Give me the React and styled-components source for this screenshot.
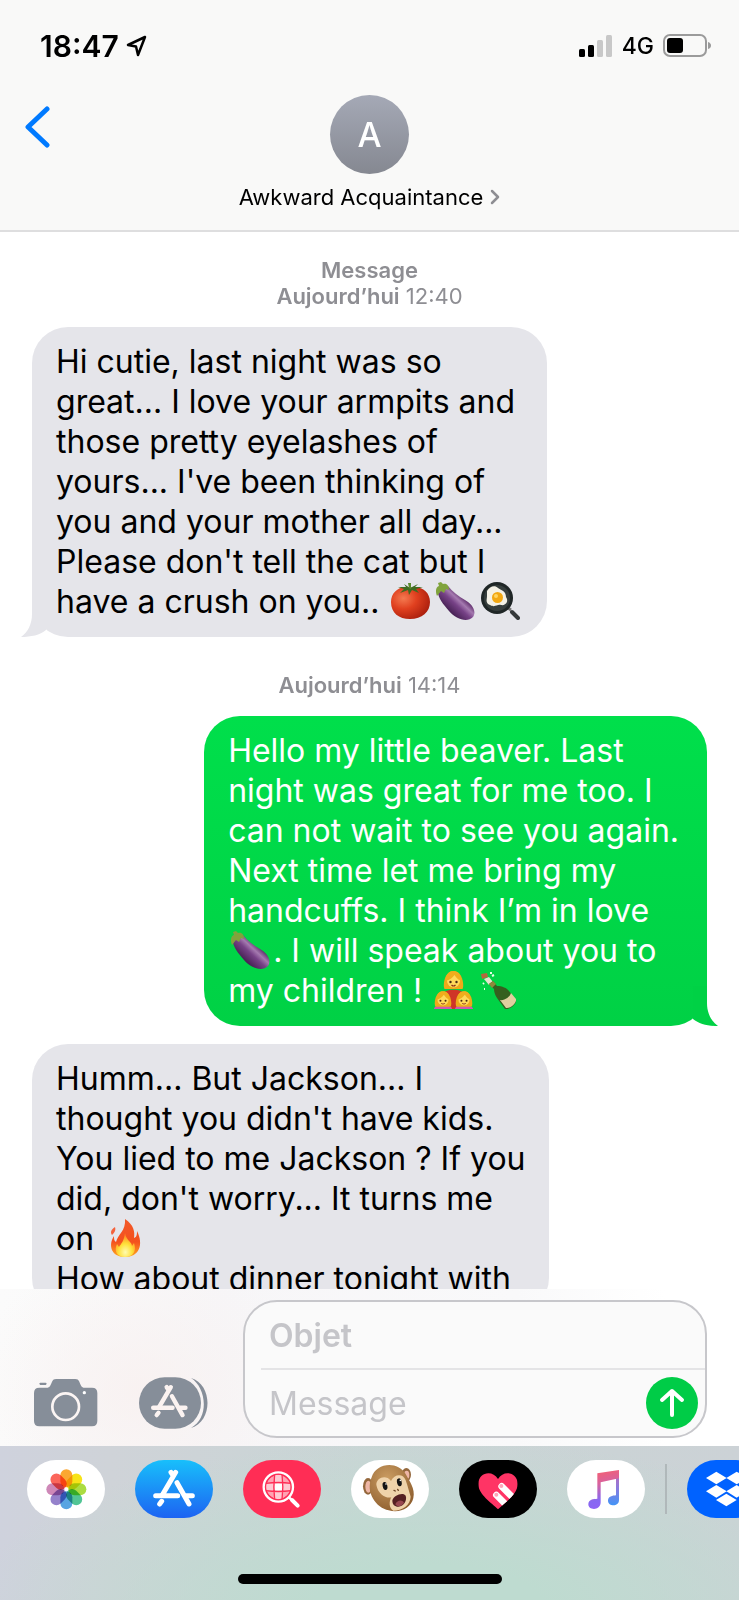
import React from "react";
import styled, { createGlobalStyle } from "styled-components";

const GlobalStyle = createGlobalStyle`
  * { box-sizing: border-box; }
  body { margin: 0; background: #ffffff; }
  button { border: 0; padding: 0; margin: 0; background: none; font: inherit; color: inherit; cursor: pointer; }
  svg { display: block; }
`;

const Phone = styled.main`
  display: flex;
  flex-direction: column;
  height: 100vh;
  overflow: hidden;
  background: #ffffff;
  color: #000000;
  font-family: Inter, "Liberation Sans", sans-serif;
`;

/* ---------- Header ---------- */

const Header = styled.header`
  flex: none;
  background: #f9f9f8;
  border-bottom: 2px solid #dededf;
`;

const StatusBar = styled.div`
  display: flex;
  align-items: center;
  justify-content: space-between;
  height: 91px;
  padding: 0 28px 0 40px;
`;

const StatusGroup = styled.div`
  display: flex;
  align-items: center;
  gap: ${(p) => p.$gap};
`;

const Clock = styled.time`
  font-size: 30px;
  font-weight: 600;
  line-height: 36px;
`;

const Network = styled.span`
  font-size: 23px;
  font-weight: 500;
  line-height: 28px;
`;

const NavBar = styled.nav`
  display: grid;
  grid-template-columns: 1fr auto 1fr;
  align-items: start;
  padding: 4px 24px 20px;
`;

const BackButton = styled.button`
  justify-self: start;
  margin-top: 10px;
`;

const Contact = styled.button`
  display: flex;
  flex-direction: column;
  align-items: center;
  gap: 10px;
`;

const Avatar = styled.span`
  display: flex;
  align-items: center;
  justify-content: center;
  width: 79px;
  height: 79px;
  border-radius: 50%;
  background: linear-gradient(#a5a9b6, #858891);
  color: #ffffff;
  font-size: 34px;
  font-weight: 500;
`;

const ContactName = styled.span`
  display: flex;
  align-items: center;
  gap: 7px;
  font-size: 22px;
  line-height: 26px;
`;

/* ---------- Conversation ---------- */

const Conversation = styled.section`
  flex: 1;
  min-height: 0;
  display: flex;
  flex-direction: column;
  gap: 18px;
  padding: 25px 32px 0;
  overflow-y: auto;
  scrollbar-width: none;
`;

const Stamp = styled.p`
  flex: none;
  margin: ${(p) => (p.$spaced ? "17px" : "0")} 0 0;
  color: #8e8e93;
  font-size: 22px;
  line-height: 26px;
  text-align: center;
  strong { font-weight: 600; }
`;

const Bubble = styled.div`
  position: relative;
  flex: none;
  align-self: ${(p) => (p.$sent ? "flex-end" : "flex-start")};
  padding: 15px ${(p) => (p.$sent ? "28px" : "24px")} 15px 24px;
  border-radius: 36px;
  background: ${(p) => (p.$sent ? "linear-gradient(#00df4b, #00d145)" : "#e5e5ea")};
  color: ${(p) => (p.$sent ? "#ffffff" : "#000000")};
  font-size: 32px;
  line-height: 40px;
  white-space: pre;
`;

const TailShape = styled.svg`
  position: absolute;
  bottom: 0;
  ${(p) => (p.$sent ? "right: -11px; transform: scaleX(-1);" : "left: -11px;")}
`;

const EmojiShape = styled.svg`
  display: inline-block;
  width: 39px;
  height: 38px;
  margin: 0 3px;
  vertical-align: -7px;
`;

/* ---------- Composer ---------- */

const Composer = styled.form`
  flex: none;
  display: flex;
  align-items: flex-end;
  padding: 11px 32px 8px 34px;
  background:
    radial-gradient(ellipse 170px 140px at 19% 65%, rgba(248, 240, 239, 0.8), rgba(248, 240, 239, 0)),
    linear-gradient(90deg, #fbfbfb, #f7f6f8 30%, #f9f9fa 70%, #ffffff 90%);
`;

const ToolButton = styled.button`
  display: flex;
  align-items: center;
  height: 70px;
  margin-right: ${(p) => p.$after};
`;

const Fields = styled.div`
  flex: 1;
  min-width: 0;
  border: 2px solid #c7c7cb;
  border-radius: 34px;
  background: #fafafa;
  overflow: hidden;
`;

const FieldRow = styled.div`
  display: flex;
  align-items: center;
  height: 66px;
  padding-right: 7px;
  margin-left: 16px;
  padding-left: 8px;
  & + & { height: 68px; border-top: 2px solid #e4e4e6; }
`;

const Field = styled.input`
  flex: 1;
  min-width: 0;
  border: 0;
  padding: 2px 0 0;
  outline: 0;
  background: none;
  font-family: inherit;
  font-size: 32px;
  font-weight: ${(p) => (p.$strong ? 600 : 400)};
  line-height: 40px;
  color: #000000;
  &::placeholder { color: #c5c5c9; opacity: 1; }
`;

const SendButton = styled.button`
  display: flex;
  align-items: center;
  justify-content: center;
  width: 52px;
  height: 52px;
  border-radius: 50%;
  background: #00cc47;
`;

/* ---------- App drawer ---------- */

const Drawer = styled.footer`
  flex: none;
  padding: 14px 0 16px;
  background:
    radial-gradient(ellipse 62% 110% at 58% 105%, #bedbd0 25%, rgba(190, 219, 208, 0)),
    linear-gradient(90deg, #cfd2dd, #cfd3d8 15%, #c9d5d5 50%, #ccd2d6);
`;

const AppRow = styled.div`
  display: flex;
  align-items: center;
  gap: 30px;
  padding-left: 27px;
  overflow: hidden;
`;

const AppButton = styled.button`
  flex: none;
  width: 78px;
  height: 58px;
  border-radius: 29px;
  background: ${(p) => p.$fill};
  overflow: hidden;
`;

const Separator = styled.span`
  flex: none;
  width: 2px;
  height: 50px;
  margin: 0 -10px;
  background: #b0b8ba;
`;

const HomeIndicator = styled.div`
  width: 36%;
  max-width: 264px;
  height: 10px;
  margin: 56px auto 0;
  border-radius: 5px;
  background: #000000;
`;

/* ---------- Drawings ---------- */

const Tail = ({ sent }) => (
  <TailShape $sent={sent} width="25" height="40" viewBox="0 0 25 40" aria-hidden="true">
    <path d="M11 0V17C11 27 7 35 0 40C10 40 19 38 25 33V0Z" fill={sent ? "#00d145" : "#e5e5ea"} />
  </TailShape>
);

const Tomato = () => (
  <EmojiShape viewBox="0 0 39 38" role="img" aria-label="tomato">
    <defs>
      <radialGradient id="tomato" cx="0.32" cy="0.35" r="0.75">
        <stop offset="0" stopColor="#f47a50" />
        <stop offset="0.45" stopColor="#e0401f" />
        <stop offset="1" stopColor="#a81d0c" />
      </radialGradient>
    </defs>
    <path d="M19 6C9 3 0 10 0 20C0 31 8 37 19 37C31 37 39 30 39 20C39 9 29 3 19 6Z" fill="url(#tomato)" />
    <path d="M19 6L13 2L15 5L7 5L13 7L9 11L17 8L18 13L21 8L28 11L25 7L32 5L24 5L27 2L21 5Z" fill="#3f6b20" />
    <path d="M18 6L17 1L20 1L20 7Z" fill="#5a8a2b" />
  </EmojiShape>
);

const Eggplant = () => (
  <EmojiShape viewBox="0 0 39 38" role="img" aria-label="eggplant">
    <defs>
      <linearGradient id="eggplant" x1="0.25" y1="0.7" x2="0.65" y2="0.3">
        <stop offset="0" stopColor="#452052" />
        <stop offset="0.5" stopColor="#774287" />
        <stop offset="0.75" stopColor="#a57ab0" />
        <stop offset="1" stopColor="#653471" />
      </linearGradient>
    </defs>
    <path d="M2 8C1 15 7 22 13 29C20 37 31 41 37 35C41 29 36 22 29 18C22 14 17 10 12 4Z" fill="url(#eggplant)" />
    <path d="M1 14C-1 9 0 5 3 4L2 1L5 0L7 2C11 1 13 4 13 8L10 7L8 11L5 9Z" fill="#80a33c" />
  </EmojiShape>
);

const FryingPan = () => (
  <EmojiShape viewBox="0 0 39 38" role="img" aria-label="cooking">
    <path d="M27 26L30 28" stroke="#777777" strokeWidth="3" />
    <path d="M31 30L37 36" stroke="#35383a" strokeWidth="4" strokeLinecap="round" />
    <circle cx="16" cy="16" r="16" fill="#1f2626" />
    <circle cx="16" cy="16" r="13" fill="#363e3d" />
    <path d="M6 9C9 4 14 3 17 6C20 8 25 9 25 15C28 19 25 24 20 23C16 22 14 26 9 23C4 21 6 17 6 14Z" fill="#f4f1e6" />
    <circle cx="16.500" cy="15.500" r="5.500" fill="#f2a812" />
    <circle cx="15" cy="14" r="2" fill="#ffd560" />
  </EmojiShape>
);

const Girl = ({ x, y, scale }) => (
  <g transform={`translate(${x} ${y}) scale(${scale})`}>
    <path d="M-9 9C-11 5 -9 -9 0 -9S11 5 9 9Z" fill="#eda91a" />
    <circle r="6.500" cy="1" fill="#ffd95a" />
    <path d="M-8 1C-4 0 -1 -2 1 -5C3 -2 5 0 8 1C8 -6 4 -9 0 -9S-8 -6 -8 1Z" fill="#f0ad1c" />
    <circle cx="-3" cy="2" r="1.200" fill="#4a2c10" />
    <circle cx="3" cy="2" r="1.200" fill="#4a2c10" />
    <path d="M-2 5Q0 7 2 5" stroke="#8c3318" strokeWidth="1.200" fill="none" />
  </g>
);

const Family = () => (
  <EmojiShape viewBox="0 0 39 38" role="img" aria-label="mother with two daughters">
    <path d="M9 38V24C9 17 30 17 30 24V38Z" fill="#cf3527" />
    <Girl x={19.500} y={9} scale={1} />
    <path d="M0 38C0 33 18 33 18 38ZM21 38C21 33 39 33 39 38Z" fill="#cf58b0" />
    <Girl x={9} y={28} scale={0.850} />
    <Girl x={30} y={28} scale={0.850} />
  </EmojiShape>
);

const Champagne = () => (
  <EmojiShape viewBox="0 0 39 38" role="img" aria-label="champagne bottle">
    <path d="M2 3L8 2L9 6L3 8Z" fill="#b5673c" />
    <path d="M5 8L10 6L14 11L10 14Z" fill="#e6e3cf" />
    <path d="M12 1V3M5 12L4 13M13 5L15 4M5 18H6" stroke="#e8ffe8" strokeWidth="2" />
    <path d="M10 13L14 10L18 15C23 15 28 17 30 20L37 29C38 33 31 39 26 38L18 27C16 24 15 21 15 18Z" fill="#35601f" />
    <path d="M21 29C25 30 31 26 32 22L37 28C38 32 31 38 27 37Z" fill="#e0cf9f" />
    <path d="M10 13L14 10L17 13L13 17Z" fill="#8e8a3c" />
  </EmojiShape>
);

const Fire = () => (
  <EmojiShape viewBox="0 0 39 38" role="img" aria-label="fire">
    <defs>
      <linearGradient id="fire" x1="0" y1="0" x2="0" y2="1">
        <stop offset="0" stopColor="#f2592a" />
        <stop offset="0.6" stopColor="#f4511e" />
        <stop offset="1" stopColor="#ffa81f" />
      </linearGradient>
      <radialGradient id="flame" cx="0.5" cy="0.8" r="0.7">
        <stop offset="0" stopColor="#fffbb0" />
        <stop offset="0.5" stopColor="#ffe13a" />
        <stop offset="1" stopColor="#ff8a22" />
      </radialGradient>
    </defs>
    <path d="M19 0C28 6 29 13 28 19C31 18 31 15 31 12C38 26 33 38 19 38C5 38 2 26 8 17C8 20 8 22 10 23C12 15 20 12 19 0Z" fill="url(#fire)" />
    <path d="M9 8C5 11 4 13 6 16C9 13 10 11 9 8Z" fill="#f4623c" />
    <path d="M19 14C20 21 26 23 26 27L28 24C31 32 27 38 19 38C10 38 8 31 11 25L13 28C15 25 18 22 19 14Z" fill="url(#flame)" />
  </EmojiShape>
);

const LocationArrow = () => (
  <svg width="22" height="22" viewBox="0 0 22 22" aria-hidden="true">
    <path d="M20 2L3 10L11 11.500L13 20Z" fill="none" stroke="#000000" strokeWidth="2.500" strokeLinejoin="round" />
  </svg>
);

const Signal = () => (
  <svg width="34" height="22" viewBox="0 0 34 22" aria-label="Signal">
    <rect x="0" y="14" width="6" height="8" rx="1.500" />
    <rect x="9" y="10" width="6" height="12" rx="1.500" />
    <rect x="18" y="5" width="6" height="17" rx="1.500" fill="#c8c8c8" />
    <rect x="27" y="0" width="6" height="22" rx="1.500" fill="#c8c8c8" />
  </svg>
);

const Battery = () => (
  <svg width="48" height="23" viewBox="0 0 48 23" aria-label="Battery">
    <rect x="1" y="1" width="42" height="21" rx="6" fill="none" stroke="#9b9b9b" strokeWidth="2" />
    <rect x="4" y="4" width="16" height="15" rx="3" />
    <path d="M45 8Q48 9 48 11.500T45 15Z" fill="#9b9b9b" />
  </svg>
);

const StoreGlyph = () => (
  <>
    <path d="M122 37L82 105M108 37L114 46M126 68L162 132M80 124L74 132" />
    <path d="M62 107H128M154 107H172" />
  </>
);

const CameraIcon = () => (
  <svg width="64" height="48" viewBox="0 0 192 144" aria-hidden="true">
    <path d="M16 26H38C48 26 50 18 54 8C57 2 60 0 66 0H124C130 0 133 2 136 8C140 18 142 26 152 26H174Q190 26 190 42V126Q190 142 174 142H16Q0 142 0 126V42Q0 26 16 26Z" fill="#868e99" />
    <rect x="17" y="11" width="20" height="7" rx="2" fill="#868e99" />
    <circle cx="95" cy="83" r="40" fill="none" stroke="#fbf5f4" strokeWidth="8" />
    <circle cx="151" cy="41" r="5" fill="#ffffff" />
  </svg>
);

const AppsIcon = () => (
  <svg width="70" height="52" viewBox="0 0 210 156" aria-hidden="true">
    <path d="M156 3C222 22 222 134 156 153C214 120 200 30 156 3Z" fill="#868e99" />
    <rect x="0" y="1" width="186" height="154" rx="77" fill="#868e99" />
    <g transform="translate(-12 -2) scale(0.880)" fill="none" stroke="#fbf3f1" strokeWidth="15" strokeLinecap="round">
      <StoreGlyph />
    </g>
  </svg>
);

const petals = ["#fb9d1a", "#f6e000", "#a2d92c", "#3fbf8a", "#459adf", "#8a74c6", "#c97bb0", "#fb5549"];

const PhotosArt = () => (
  <svg viewBox="0 0 234 174">
    <g transform="translate(118 88)">
      {petals.map((c, i) => (
        <rect key={c} x="-18" y="-60" width="36" height="54" rx="18" fill={c} opacity="0.900" transform={`rotate(${i * 45})`} style={{ mixBlendMode: "multiply" }} />
      ))}
      <circle r="4" fill="#ffffff" />
    </g>
  </svg>
);

const StoreArt = () => (
  <svg viewBox="0 0 234 174" fill="none" stroke="#ffffff" strokeWidth="15" strokeLinecap="round">
    <StoreGlyph />
  </svg>
);

const SearchArt = () => (
  <svg viewBox="0 0 234 174">
    <circle cx="106" cy="81" r="36" fill="#ffa3b3" />
    <path d="M95 44H117V70H95ZM95 92H117V118H95ZM69 70H95V92H69ZM117 70H143V92H117Z" fill="#ffc9d2" />
    <rect x="95" y="70" width="22" height="22" fill="#ffffff" />
    <path d="M95 42Q90 81 95 120M117 42Q122 81 117 120M68 70Q106 65 144 70M68 92Q106 97 144 92" stroke="#ff2d55" strokeWidth="4" fill="none" />
    <circle cx="106" cy="81" r="39" fill="none" stroke="#ff2d55" strokeWidth="5" />
    <circle cx="106" cy="81" r="44" fill="none" stroke="#ffffff" strokeWidth="7" />
    <path d="M138 112L145 119" stroke="#ffffff" strokeWidth="8" />
    <path d="M147 120L164 137" stroke="#ffffff" strokeWidth="12" strokeLinecap="round" />
  </svg>
);

const MonkeyArt = () => (
  <svg viewBox="0 0 234 174">
    <defs>
      <radialGradient id="fur" cx="0.4" cy="0.3" r="0.8">
        <stop offset="0" stopColor="#cb9d62" />
        <stop offset="1" stopColor="#8a5a2b" />
      </radialGradient>
    </defs>
    <ellipse cx="51" cy="79" rx="15" ry="25" fill="#94673c" />
    <ellipse cx="52" cy="80" rx="9" ry="18" fill="#eeb6a6" />
    <ellipse cx="166" cy="44" rx="14" ry="20" fill="#94673c" />
    <ellipse cx="167" cy="45" rx="8" ry="13" fill="#eeb6a6" />
    <path d="M62 52C74 10 138 0 164 42C174 62 194 86 187 114C180 144 146 161 113 151C76 144 42 98 62 52Z" fill="url(#fur)" />
    <path d="M76 74C76 54 104 42 120 63C130 40 158 40 164 61C171 81 174 94 179 110C178 136 154 152 127 152C113 144 114 124 121 112C104 116 80 101 76 74Z" fill="#efd3aa" />
    <ellipse cx="102" cy="78" rx="7" ry="12" fill="#141414" transform="rotate(-12 102 78)" />
    <ellipse cx="145" cy="67" rx="7" ry="12" fill="#141414" transform="rotate(-12 145 67)" />
    <circle cx="105" cy="72" r="2.500" fill="#ffffff" />
    <circle cx="148" cy="61" r="2.500" fill="#ffffff" />
    <path d="M129 91L133 93M140 88L142 91" stroke="#6f4727" strokeWidth="4" strokeLinecap="round" />
    <path d="M124 122C125 108 156 94 164 107C169 120 159 139 142 140C131 140 124 133 124 122Z" fill="#552022" />
    <path d="M133 133C139 119 154 119 159 128C152 139 140 143 133 133Z" fill="#984850" />
  </svg>
);

const HeartArt = () => (
  <svg viewBox="0 0 234 174">
    <defs>
      <clipPath id="heart">
        <path d="M117 148C98 128 58 104 58 72C58 37 100 28 117 57C134 28 176 37 176 72C176 104 136 128 117 148Z" />
      </clipPath>
    </defs>
    <g clipPath="url(#heart)">
      <rect width="234" height="174" fill="#ff3465" />
      <g stroke="#ffffff" strokeWidth="20" strokeLinecap="round">
        <path d="M128 79L188 139M112 105L160 153" />
      </g>
      <circle cx="127" cy="78" r="6" fill="#ffa6ba" />
      <circle cx="112" cy="104" r="6" fill="#ffa6ba" />
    </g>
  </svg>
);

const MusicArt = () => (
  <svg viewBox="0 0 234 174">
    <defs>
      <linearGradient id="note" x1="0.3" y1="0" x2="0.5" y2="1">
        <stop offset="0" stopColor="#f6606f" />
        <stop offset="0.35" stopColor="#d8629d" />
        <stop offset="0.75" stopColor="#8768f2" />
        <stop offset="1" stopColor="#9161f5" />
      </linearGradient>
      <linearGradient id="stem" x1="0" y1="0" x2="0" y2="1">
        <stop offset="0" stopColor="#b16fc0" />
        <stop offset="0.4" stopColor="#8a7ade" />
        <stop offset="1" stopColor="#4295f7" />
      </linearGradient>
    </defs>
    <path d="M147 50H156V120C156 142 123 140 123 122C123 109 137 107 147 106Z" fill="url(#stem)" />
    <path d="M91 40L156 30V55L101 67V127C101 153 63 152 64 132C65 118 78 117 91 116Z" fill="url(#note)" />
  </svg>
);

const DropboxArt = () => (
  <svg viewBox="0 0 234 174" fill="#ffffff">
    {[[88, 54], [149, 54], [88, 94], [149, 94], [118, 120]].map(([x, y]) => (
      <path key={`${x}-${y}`} d={`M${x - 31} ${y}L${x} ${y - 19}L${x + 31} ${y}L${x} ${y + 19}Z`} />
    ))}
  </svg>
);

const apps = [
  { name: "Photos", fill: "#ffffff", Art: PhotosArt },
  { name: "App Store", fill: "linear-gradient(#18bffb, #1d63f2)", Art: StoreArt },
  { name: "#images", fill: "#ff2d55", Art: SearchArt },
  { name: "Animoji", fill: "#ffffff", Art: MonkeyArt },
  { name: "Digital Touch", fill: "#000000", Art: HeartArt },
  { name: "Music", fill: "#ffffff", Art: MusicArt },
];

export default function App() {
  return (
    <>
      <GlobalStyle />
      <Phone>
        <Header>
          <StatusBar>
            <StatusGroup $gap="6px">
              <Clock>18:47</Clock>
              <LocationArrow />
            </StatusGroup>
            <StatusGroup $gap="9px">
              <Signal />
              <Network>4G</Network>
              <Battery />
            </StatusGroup>
          </StatusBar>
          <NavBar>
            <BackButton type="button" aria-label="Back">
              <svg width="26" height="44" viewBox="0 0 26 44" aria-hidden="true">
                <path d="M23 4L4 22L23 40" fill="none" stroke="#007aff" strokeWidth="5" strokeLinecap="round" strokeLinejoin="round" />
              </svg>
            </BackButton>
            <Contact type="button">
              <Avatar>A</Avatar>
              <ContactName>
                Awkward Acquaintance
                <svg width="10" height="16" viewBox="0 0 10 16" aria-hidden="true">
                  <path d="M2 2L8 8L2 14" fill="none" stroke="#8e8e93" strokeWidth="2.500" strokeLinecap="round" strokeLinejoin="round" />
                </svg>
              </ContactName>
            </Contact>
          </NavBar>
        </Header>

        <Conversation>
          <Stamp>
            <strong>Message</strong>
            <br />
            <strong>Aujourd’hui</strong> 12:40
          </Stamp>
          <Bubble>
            {"Hi cutie, last night was so\ngreat... I love your armpits and\nthose pretty eyelashes of\nyours... I've been thinking of\nyou and your mother all day...\nPlease don't tell the cat but I\nhave a crush on you.. "}
            <Tomato />
            <Eggplant />
            <FryingPan />
            <Tail />
          </Bubble>
          <Stamp $spaced>
            <strong>Aujourd’hui</strong> 14:14
          </Stamp>
          <Bubble $sent>
            {"Hello my little beaver. Last\nnight was great for me too. I\ncan not wait to see you again.\nNext time let me bring my\nhandcuffs. I think I’m in love\n"}
            <Eggplant />
            {". I will speak about you to\nmy children ! "}
            <Family />
            <Champagne />
            <Tail sent />
          </Bubble>
          <Bubble>
            {"Humm... But Jackson... I\nthought you didn't have kids.\nYou lied to me Jackson ? If you\ndid, don't worry... It turns me\non "}
            <Fire />
            {"\nHow about dinner tonight with"}
          </Bubble>
        </Conversation>

        <Composer onSubmit={(e) => e.preventDefault()}>
          <ToolButton type="button" aria-label="Camera" $after="41px">
            <CameraIcon />
          </ToolButton>
          <ToolButton type="button" aria-label="Apps" $after="34px">
            <AppsIcon />
          </ToolButton>
          <Fields>
            <FieldRow>
              <Field type="text" aria-label="Objet" placeholder="Objet" $strong />
            </FieldRow>
            <FieldRow>
              <Field type="text" aria-label="Message" placeholder="Message" />
              <SendButton type="submit" aria-label="Send">
                <svg width="26" height="30" viewBox="0 0 26 30" aria-hidden="true">
                  <path d="M13 27V3M3 12L13 3L23 12" fill="none" stroke="#ffffff" strokeWidth="4" strokeLinecap="round" strokeLinejoin="round" />
                </svg>
              </SendButton>
            </FieldRow>
          </Fields>
        </Composer>

        <Drawer>
          <AppRow>
            {apps.map(({ name, fill, Art }) => (
              <AppButton key={name} type="button" aria-label={name} $fill={fill}>
                <Art />
              </AppButton>
            ))}
            <Separator />
            <AppButton type="button" aria-label="Dropbox" $fill="#0062ff">
              <DropboxArt />
            </AppButton>
          </AppRow>
          <HomeIndicator />
        </Drawer>
      </Phone>
    </>
  );
}
